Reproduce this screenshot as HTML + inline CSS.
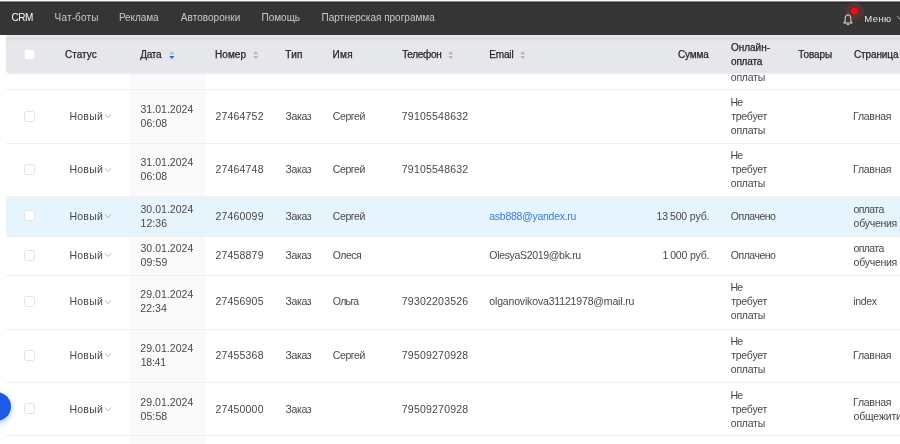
<!DOCTYPE html>
<html lang="ru"><head><meta charset="utf-8"><title>CRM</title>
<style>
*{box-sizing:border-box;margin:0;padding:0}
html,body{width:900px;height:444px;overflow:hidden;background:#fff}
body{font-family:"Liberation Sans",sans-serif;font-size:10.5px;line-height:14px;color:#484848;position:relative}
.layer{position:absolute;left:0;top:0;width:900px;height:444px;overflow:hidden;will-change:transform}
.nav{position:absolute;left:0;top:0;width:900px;height:35px;background:linear-gradient(#fbf7ff 0,#fbf7ff 1px,#8a888d 1px,#8a888d 2px,#282828 2px,#282828 3px,#353535 3px)}
.hd{position:absolute;left:6px;top:35px;width:900px;height:38.2px;background:linear-gradient(#e9eaed 0,#e9eaed 1.5px,#dedfe3 2.5px,#e6e7eb 8px);border-radius:0 0 0 4px;box-shadow:0 1px 2px rgba(0,0,0,.07)}
.h{position:absolute;color:#262626;white-space:nowrap;font-size:10px;-webkit-text-stroke:.25px #262626}
.n{position:absolute;white-space:nowrap;font-size:10px}
.sep{position:absolute;left:6px;width:894px;height:1px;background:#f0f0f0}
.hl{position:absolute;left:6px;width:894px;background:#e6f4fe}
.datebg{position:absolute;left:129.5px;top:73px;width:75px;height:371px;background:#fafafa}
.t{position:absolute;white-space:nowrap}
.cb{position:absolute;width:11px;height:11px;border:1px solid #e3e3e3;border-radius:2.5px;background:#fff}
.chev{position:absolute}
.fab{position:absolute;left:-18.4px;top:392px;width:29.4px;height:29.4px;border-radius:50%;background:#1a5ce6;box-shadow:0 2px 6px rgba(26,92,230,.35)}
</style></head><body>

<div class="layer">
<div class="datebg"></div>
<div class="sep" style="top:89px"></div>
<div class="t" style="left:730.80px;top:70px;letter-spacing:-0.235px;">оплаты</div>
<div class="sep" style="top:143px"></div>
<div class="cb" style="left:24px;top:111px"></div>
<div class="t" style="left:69.42px;top:109px;letter-spacing:0.256px;">Новый</div>
<svg class="chev" style="left:104.3px;top:113.2px" width="8" height="6" viewBox="0 0 8 6"><path d="M0.8 1.5 L4 4.5 L7.2 1.5" fill="none" stroke="#adadad" stroke-width=".9"/></svg>
<div class="t" style="left:140.43px;top:102px;letter-spacing:0.036px;">31.01.2024</div>
<div class="t" style="left:140.43px;top:116px;letter-spacing:0.125px;">06:08</div>
<div class="t" style="left:215.50px;top:109px;letter-spacing:0.179px;">27464752</div>
<div class="t" style="left:285.43px;top:109px;letter-spacing:-0.338px;">Заказ</div>
<div class="t" style="left:332.80px;top:109px;letter-spacing:-0.395px;">Сергей</div>
<div class="t" style="left:401.80px;top:109px;letter-spacing:0.215px;">79105548632</div>
<div class="t" style="left:730.42px;top:95px;letter-spacing:-0.725px;">Не</div>
<div class="t" style="left:731.17px;top:109px;letter-spacing:-0.225px;">требует</div>
<div class="t" style="left:730.80px;top:123px;letter-spacing:-0.235px;">оплаты</div>
<div class="t" style="left:853.12px;top:109px;letter-spacing:-0.279px;">Главная</div>
<div class="sep" style="top:196px"></div>
<div class="cb" style="left:24px;top:164px"></div>
<div class="t" style="left:69.42px;top:162px;letter-spacing:0.256px;">Новый</div>
<svg class="chev" style="left:104.3px;top:166.6px" width="8" height="6" viewBox="0 0 8 6"><path d="M0.8 1.5 L4 4.5 L7.2 1.5" fill="none" stroke="#adadad" stroke-width=".9"/></svg>
<div class="t" style="left:140.43px;top:155px;letter-spacing:0.036px;">31.01.2024</div>
<div class="t" style="left:140.43px;top:169px;letter-spacing:0.125px;">06:08</div>
<div class="t" style="left:215.50px;top:162px;letter-spacing:0.179px;">27464748</div>
<div class="t" style="left:285.43px;top:162px;letter-spacing:-0.338px;">Заказ</div>
<div class="t" style="left:332.80px;top:162px;letter-spacing:-0.395px;">Сергей</div>
<div class="t" style="left:401.80px;top:162px;letter-spacing:0.215px;">79105548632</div>
<div class="t" style="left:730.42px;top:148px;letter-spacing:-0.725px;">Не</div>
<div class="t" style="left:731.17px;top:162px;letter-spacing:-0.225px;">требует</div>
<div class="t" style="left:730.80px;top:176px;letter-spacing:-0.235px;">оплаты</div>
<div class="t" style="left:853.12px;top:162px;letter-spacing:-0.279px;">Главная</div>
<div class="hl" style="top:197.0px;height:39.0px"></div>
<div class="sep" style="top:236px"></div>
<div class="cb" style="left:24px;top:210px"></div>
<div class="t" style="left:69.42px;top:209px;letter-spacing:0.256px;">Новый</div>
<svg class="chev" style="left:104.3px;top:212.9px" width="8" height="6" viewBox="0 0 8 6"><path d="M0.8 1.5 L4 4.5 L7.2 1.5" fill="none" stroke="#adadad" stroke-width=".9"/></svg>
<div class="t" style="left:140.43px;top:202px;letter-spacing:0.036px;">30.01.2024</div>
<div class="t" style="left:140.55px;top:216px;letter-spacing:0.069px;">12:36</div>
<div class="t" style="left:215.50px;top:209px;letter-spacing:0.179px;">27460099</div>
<div class="t" style="left:285.43px;top:209px;letter-spacing:-0.338px;">Заказ</div>
<div class="t" style="left:332.80px;top:209px;letter-spacing:-0.395px;">Сергей</div>
<div class="t" style="left:489.30px;top:209px;letter-spacing:-0.273px;color:#3a7be0;">asb888@yandex.ru</div>
<div class="t" style="left:656.55px;top:209px;letter-spacing:-0.130px;">13 500 руб.</div>
<div class="t" style="left:730.80px;top:209px;letter-spacing:-0.489px;">Оплачено</div>
<div class="t" style="left:853.60px;top:202px;letter-spacing:-0.630px;">оплата</div>
<div class="t" style="left:853.60px;top:216px;letter-spacing:-0.264px;">обучения</div>
<div class="sep" style="top:275px"></div>
<div class="cb" style="left:24px;top:250px"></div>
<div class="t" style="left:69.42px;top:248px;letter-spacing:0.256px;">Новый</div>
<svg class="chev" style="left:104.3px;top:252.3px" width="8" height="6" viewBox="0 0 8 6"><path d="M0.8 1.5 L4 4.5 L7.2 1.5" fill="none" stroke="#adadad" stroke-width=".9"/></svg>
<div class="t" style="left:140.43px;top:241px;letter-spacing:0.036px;">30.01.2024</div>
<div class="t" style="left:140.43px;top:255px;letter-spacing:0.156px;">09:59</div>
<div class="t" style="left:215.50px;top:248px;letter-spacing:0.179px;">27458879</div>
<div class="t" style="left:285.43px;top:248px;letter-spacing:-0.338px;">Заказ</div>
<div class="t" style="left:332.80px;top:248px;letter-spacing:-0.538px;">Олеся</div>
<div class="t" style="left:489.30px;top:248px;letter-spacing:-0.323px;">OlesyaS2019@bk.ru</div>
<div class="t" style="left:662.55px;top:248px;letter-spacing:-0.158px;">1 000 руб.</div>
<div class="t" style="left:730.80px;top:248px;letter-spacing:-0.489px;">Оплачено</div>
<div class="t" style="left:853.60px;top:241px;letter-spacing:-0.630px;">оплата</div>
<div class="t" style="left:853.60px;top:255px;letter-spacing:-0.264px;">обучения</div>
<div class="sep" style="top:329px"></div>
<div class="cb" style="left:24px;top:296px"></div>
<div class="t" style="left:69.42px;top:294px;letter-spacing:0.256px;">Новый</div>
<svg class="chev" style="left:104.3px;top:298.9px" width="8" height="6" viewBox="0 0 8 6"><path d="M0.8 1.5 L4 4.5 L7.2 1.5" fill="none" stroke="#adadad" stroke-width=".9"/></svg>
<div class="t" style="left:140.30px;top:287px;letter-spacing:0.050px;">29.01.2024</div>
<div class="t" style="left:140.30px;top:301px;letter-spacing:0.050px;">22:34</div>
<div class="t" style="left:215.50px;top:294px;letter-spacing:0.179px;">27456905</div>
<div class="t" style="left:285.43px;top:294px;letter-spacing:-0.338px;">Заказ</div>
<div class="t" style="left:332.80px;top:294px;letter-spacing:-0.681px;">Ольга</div>
<div class="t" style="left:401.80px;top:294px;letter-spacing:0.215px;">79302203526</div>
<div class="t" style="left:489.30px;top:294px;letter-spacing:-0.161px;">olganovikova31121978@mail.ru</div>
<div class="t" style="left:730.42px;top:280px;letter-spacing:-0.725px;">Не</div>
<div class="t" style="left:731.17px;top:294px;letter-spacing:-0.225px;">требует</div>
<div class="t" style="left:730.80px;top:308px;letter-spacing:-0.235px;">оплаты</div>
<div class="t" style="left:853.25px;top:294px;letter-spacing:-0.312px;">index</div>
<div class="sep" style="top:382px"></div>
<div class="cb" style="left:24px;top:350px"></div>
<div class="t" style="left:69.42px;top:348px;letter-spacing:0.256px;">Новый</div>
<svg class="chev" style="left:104.3px;top:352.4px" width="8" height="6" viewBox="0 0 8 6"><path d="M0.8 1.5 L4 4.5 L7.2 1.5" fill="none" stroke="#adadad" stroke-width=".9"/></svg>
<div class="t" style="left:140.30px;top:341px;letter-spacing:0.050px;">29.01.2024</div>
<div class="t" style="left:140.75px;top:355px;letter-spacing:-0.250px;">18:41</div>
<div class="t" style="left:215.50px;top:348px;letter-spacing:0.179px;">27455368</div>
<div class="t" style="left:285.43px;top:348px;letter-spacing:-0.338px;">Заказ</div>
<div class="t" style="left:332.80px;top:348px;letter-spacing:-0.395px;">Сергей</div>
<div class="t" style="left:401.80px;top:348px;letter-spacing:0.215px;">79509270928</div>
<div class="t" style="left:730.42px;top:334px;letter-spacing:-0.725px;">Не</div>
<div class="t" style="left:731.17px;top:348px;letter-spacing:-0.225px;">требует</div>
<div class="t" style="left:730.80px;top:362px;letter-spacing:-0.235px;">оплаты</div>
<div class="t" style="left:853.12px;top:348px;letter-spacing:-0.279px;">Главная</div>
<div class="sep" style="top:435px"></div>
<div class="cb" style="left:24px;top:403px"></div>
<div class="t" style="left:69.42px;top:402px;letter-spacing:0.256px;">Новый</div>
<svg class="chev" style="left:104.3px;top:405.9px" width="8" height="6" viewBox="0 0 8 6"><path d="M0.8 1.5 L4 4.5 L7.2 1.5" fill="none" stroke="#adadad" stroke-width=".9"/></svg>
<div class="t" style="left:140.30px;top:395px;letter-spacing:0.050px;">29.01.2024</div>
<div class="t" style="left:140.43px;top:409px;letter-spacing:0.125px;">05:58</div>
<div class="t" style="left:215.50px;top:402px;letter-spacing:0.179px;">27450000</div>
<div class="t" style="left:285.43px;top:402px;letter-spacing:-0.338px;">Заказ</div>
<div class="t" style="left:401.80px;top:402px;letter-spacing:0.215px;">79509270928</div>
<div class="t" style="left:730.42px;top:388px;letter-spacing:-0.725px;">Не</div>
<div class="t" style="left:731.17px;top:402px;letter-spacing:-0.225px;">требует</div>
<div class="t" style="left:730.80px;top:416px;letter-spacing:-0.235px;">оплаты</div>
<div class="t" style="left:853.12px;top:395px;letter-spacing:-0.279px;">Главная</div>
<div class="t" style="left:853.50px;top:409px;letter-spacing:-0.168px;">общежити</div>
</div>
<div class="layer">
<div class="hd"></div>
<div class="cb" style="left:24px;top:48.5px;border-color:#ececec"></div>
<div class="h" style="left:64.90px;top:48px;letter-spacing:0.065px;">Статус</div>
<div class="h" style="left:140.28px;top:48px;letter-spacing:-0.267px;">Дата</div>
<div class="h" style="left:215.03px;top:48px;letter-spacing:0.050px;">Номер</div>
<div class="h" style="left:285.15px;top:48px;letter-spacing:0.325px;">Тип</div>
<div class="h" style="left:332.52px;top:48px;letter-spacing:0.363px;">Имя</div>
<div class="h" style="left:402.15px;top:48px;letter-spacing:-0.317px;">Телефон</div>
<div class="h" style="left:489.22px;top:48px;letter-spacing:-0.150px;">Email</div>
<div class="h" style="left:677.90px;top:48px;letter-spacing:-0.125px;">Сумма</div>
<div class="h" style="left:730.90px;top:41px;letter-spacing:-0.008px;">Онлайн-</div>
<div class="h" style="left:731.02px;top:55px;letter-spacing:-0.195px;">оплата</div>
<div class="h" style="left:798.15px;top:48px;letter-spacing:-0.060px;">Товары</div>
<div class="h" style="left:853.90px;top:48px;letter-spacing:-0.096px;">Страница</div>
<svg style="position:absolute;left:169.20000000000002px;top:51px" width="6" height="9" viewBox="0 0 6 9"><path d="M0.2 3.3 L2.8 0.1 L5.4 3.3 Z" fill="#b9b9b9"/><path d="M0.2 4.9 L2.8 8.1 L5.4 4.9 Z" fill="#1a66ff"/></svg>
<svg style="position:absolute;left:252.8px;top:51px" width="6" height="9" viewBox="0 0 6 9"><path d="M0.2 3.3 L2.8 0.1 L5.4 3.3 Z" fill="#b9b9b9"/><path d="M0.2 4.9 L2.8 8.1 L5.4 4.9 Z" fill="#b9b9b9"/></svg>
<svg style="position:absolute;left:447.8px;top:51px" width="6" height="9" viewBox="0 0 6 9"><path d="M0.2 3.3 L2.8 0.1 L5.4 3.3 Z" fill="#b9b9b9"/><path d="M0.2 4.9 L2.8 8.1 L5.4 4.9 Z" fill="#b9b9b9"/></svg>
<svg style="position:absolute;left:520.0999999999999px;top:51px" width="6" height="9" viewBox="0 0 6 9"><path d="M0.2 3.3 L2.8 0.1 L5.4 3.3 Z" fill="#b9b9b9"/><path d="M0.2 4.9 L2.8 8.1 L5.4 4.9 Z" fill="#b9b9b9"/></svg>
<div class="nav"></div>
<div class="n" style="left:11.40px;top:11px;letter-spacing:-0.450px;color:#fff;">CRM</div>
<div class="n" style="left:54.55px;top:11px;letter-spacing:0.164px;color:#c9c9c9;">Чат-боты</div>
<div class="n" style="left:118.92px;top:11px;letter-spacing:-0.058px;color:#c9c9c9;">Реклама</div>
<div class="n" style="left:180.80px;top:11px;letter-spacing:0.040px;color:#c9c9c9;">Автоворонки</div>
<div class="n" style="left:261.55px;top:11px;letter-spacing:-0.020px;color:#c9c9c9;">Помощь</div>
<div class="n" style="left:321.55px;top:11px;letter-spacing:-0.005px;color:#c9c9c9;">Партнерская программа</div>
<div class="n" style="left:864.35px;top:12px;letter-spacing:0.367px;color:#e6e6e6;font-size:9.5px;">Меню</div>
<svg style="position:absolute;left:842px;top:12px" width="12" height="14" viewBox="0 0 12 14"><path d="M3.2 9.4 V5.8 a2.8 2.8 0 0 1 5.6 0 V9.4 L10.1 10.9 H1.9 Z" fill="none" stroke="#d6d6d6" stroke-width="1.05" stroke-linejoin="round"/><path d="M6 1.7 V3.1" stroke="#d6d6d6" stroke-width="1.05" fill="none"/><path d="M4.9 11.6 a1.1 1.1 0 0 0 2.2 0" fill="none" stroke="#d6d6d6" stroke-width="1.05"/></svg>
<svg style="position:absolute;left:840px;top:0" width="30" height="24" viewBox="0 0 30 24"><circle cx="14.7" cy="11.4" r="9.2" fill="rgba(255,40,40,.17)"/><circle cx="14.45" cy="11.05" r="3.35" fill="#ff0a0a"/></svg>
<svg style="position:absolute;left:895.5px;top:14.5px" width="8" height="6" viewBox="0 0 8 6"><path d="M1 1.2 L4 4.2 L7 1.2" fill="none" stroke="#bbb" stroke-width="1"/></svg>
<div class="fab"></div>
</div>
</body></html>
